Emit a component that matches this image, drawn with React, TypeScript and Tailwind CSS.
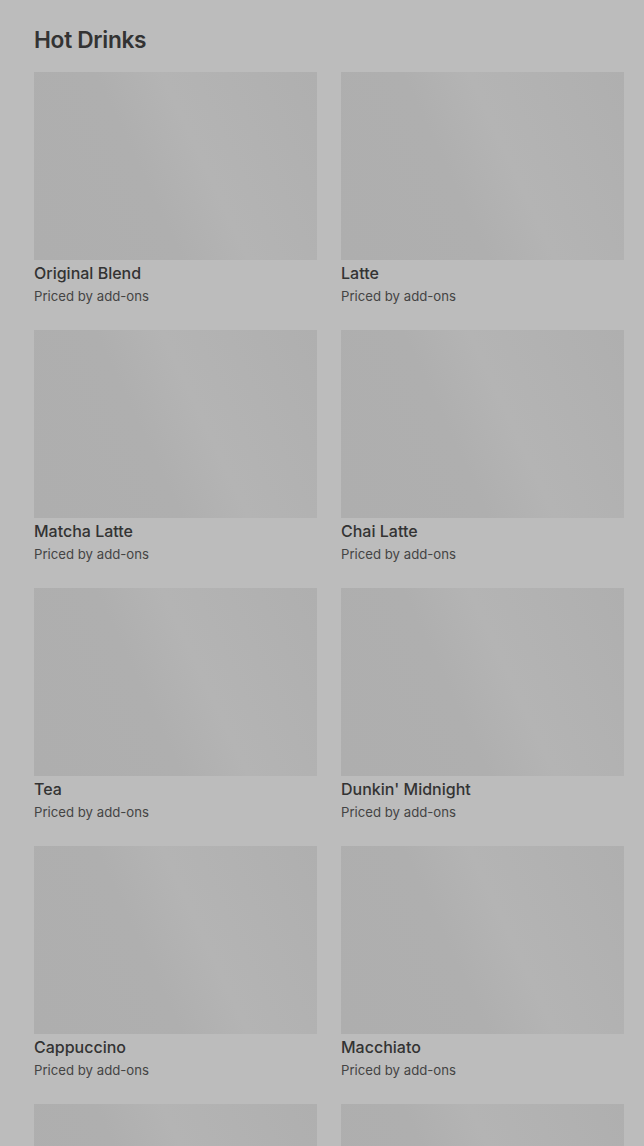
import React from "react";

const items = [
  "Original Blend",
  "Latte",
  "Matcha Latte",
  "Chai Latte",
  "Tea",
  "Dunkin' Midnight",
  "Cappuccino",
  "Macchiato",
  "Americano",
  "Espresso",
];

export default function App() {
  return (
    <div
      className="min-h-[1146px] h-[1146px] overflow-hidden bg-[#bcbcbc] pl-[34px] pr-[20px]"
      style={{ fontFamily: "Inter, 'Noto Sans', sans-serif" }}
    >
      <h1 className="pt-[24px] text-[22.7px] leading-[32px] font-semibold text-[#333333] tracking-[-0.3px]">
        Hot Drinks
      </h1>
      <div className="mt-[16px] grid grid-cols-2 gap-x-[24px] gap-y-[24px]">
        {items.map((name) => (
          <div key={name} className="flex flex-col">
            <div className="h-[188px] w-full bg-[#afafaf] bg-[linear-gradient(65deg,#aeaeae_0%,#afafaf_40%,#b4b4b4_58%,#b2b2b2_75%,#afafaf_100%)]" />
            <div className="mt-[1px] text-[16px] leading-[24px] font-medium text-[#333333]">
              {name}
            </div>
            <div className="mt-[1px] text-[13.2px] leading-[20px] text-[#444444]">
              Priced by add-ons
            </div>
          </div>
        ))}
      </div>
    </div>
  );
}
